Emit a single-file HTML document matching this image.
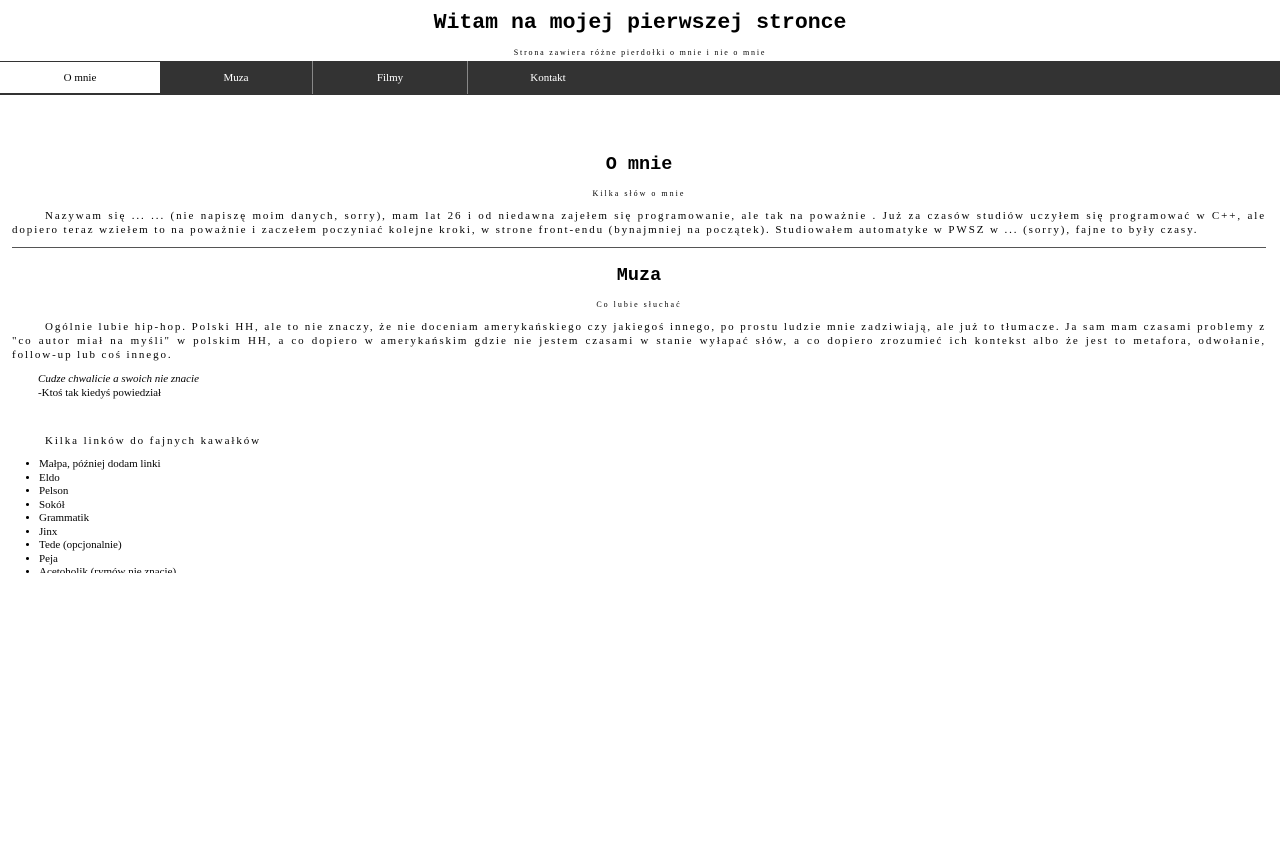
<!DOCTYPE html>
<html><head><meta charset="utf-8"><style>
body{margin:0;font-family:"Liberation Serif",serif;background:#fff;color:#000}
h1{font-family:"Liberation Mono",monospace;font-weight:bold;font-size:21.5px;text-align:center;margin:0;padding-top:11px;height:24px;line-height:24px}
.sub{font-size:8px;letter-spacing:1.8px;text-align:center;margin:0;position:absolute;top:48px;width:100%}
nav{position:absolute;top:61px;left:0;width:1280px;height:33px;background:#333;border-bottom:1px solid #333}
nav a{position:absolute;top:0;height:33px;line-height:34px;text-align:center;color:#fff;font-size:11px;text-decoration:none;border-right:1px solid #888}
nav a.act{background:#fff;color:#000;border-top:1px solid #333;border-bottom:1px solid #333;border-right:none;height:31px;line-height:32px}
main{position:absolute;top:95px;left:12px;width:1254px;height:478px;overflow:hidden}
h2{font-family:"Liberation Mono",monospace;font-weight:bold;font-size:18.5px;text-align:center;margin:0}
.s{font-size:8px;letter-spacing:2px;text-align:center;margin:0}
p.t{font-size:11px;letter-spacing:1.9px;text-align:justify;text-indent:33px;line-height:14px;margin:0}
hr{border:0;border-top:1px solid #555;margin:0}
ul{margin:0;padding-left:27px;font-size:11px;line-height:13.5px}
</style></head><body>
<h1>Witam na mojej pierwszej stronce</h1>
<p class="sub">Strona zawiera różne pierdołki o mnie i nie o mnie</p>
<nav>
<a class="act" style="left:0;width:160px">O mnie</a>
<a style="left:160px;width:152px">Muza</a>
<a style="left:313px;width:154px">Filmy</a>
<a style="left:468px;width:160px;border-right:none">Kontakt</a>
</nav>
<main>
<h2 style="position:absolute;top:59px;width:100%">O mnie</h2>
<p class="s" style="position:absolute;top:94px;width:100%">Kilka słów o mnie</p>
<p class="t" style="position:absolute;top:114px;width:100%">Nazywam się ... ... (nie napiszę moim danych, sorry), mam lat 26 i od niedawna zajełem się programowanie, ale tak na poważnie . Już za czasów studiów uczyłem się programować w C++, ale dopiero teraz wziełem to na poważnie i zaczełem poczyniać kolejne kroki, w strone front-endu (bynajmniej na początek). Studiowałem automatyke w PWSZ w ... (sorry), fajne to były czasy.</p>
<hr style="position:absolute;top:152px;width:100%">
<h2 style="position:absolute;top:170px;width:100%">Muza</h2>
<p class="s" style="position:absolute;top:205px;width:100%">Co lubie słuchać</p>
<p class="t" style="position:absolute;top:225px;width:100%">Ogólnie lubie hip-hop. Polski HH, ale to nie znaczy, że nie doceniam amerykańskiego czy jakiegoś innego, po prostu ludzie mnie zadziwiają, ale już to tłumacze. Ja sam mam czasami problemy z "co autor miał na myśli" w polskim HH, a co dopiero w amerykańskim gdzie nie jestem czasami w stanie wyłapać słów, a co dopiero zrozumieć ich kontekst albo że jest to metafora, odwołanie, follow-up lub coś innego.</p>
<div style="position:absolute;top:277px;left:26px;font-size:11px;line-height:14px"><i>Cudze chwalicie a swoich nie znacie</i><br>-Ktoś tak kiedyś powiedział</div>
<p class="t" style="position:absolute;top:339px;width:100%">Kilka linków do fajnych kawałków</p>
<ul style="position:absolute;top:363px">
<li>Małpa, później dodam linki</li><li>Eldo</li><li>Pelson</li><li>Sokół</li><li>Grammatik</li><li>Jinx</li><li>Tede (opcjonalnie)</li><li>Peja</li><li>Acetoholik (rymów nie znacie)</li>
</ul>
</main>
</body></html>
